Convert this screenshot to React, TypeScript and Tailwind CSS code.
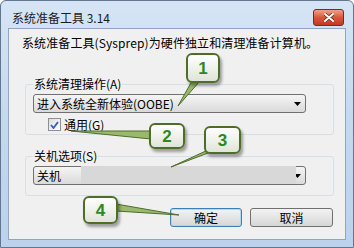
import React from "react";

const cjk = "font-['Noto_Sans_CJK_SC','Microsoft_YaHei',sans-serif]";

function Arrow() {
  return (
    <svg width="7" height="4" viewBox="0 0 7 4">
      <path d="M0 0h7L3.5 4z" fill="#000" />
    </svg>
  );
}

function Combo({ value }: { value: string }) {
  return (
    <div className="flex h-[19px] w-[273px] items-center justify-between rounded-[3px] border border-[#707070] bg-gradient-to-b from-[#f5f5f5] to-[#dadada] pl-[3px] pr-[4px] text-[12px] leading-[12px] text-black">
      <span>{value}</span>
      <Arrow />
    </div>
  );
}

function Callout({ n, className }: { n: string; className: string }) {
  return (
    <div
      className={`absolute flex items-center justify-center rounded-[6px] border-2 border-[#4e6e28] bg-gradient-to-b from-white to-[#e0e4d8] font-['Liberation_Sans',sans-serif] text-[17px] font-bold leading-none text-[#2b8a1c] shadow-[2px_3px_3px_rgba(0,0,0,0.35)] ${className}`}
    >
      {n}
    </div>
  );
}

export default function App() {
  return (
    <div
      className={`relative flex h-[248px] w-[354px] flex-col overflow-hidden rounded-t-[6px] border border-[#62768f] bg-gradient-to-b from-[#d6e5f5] via-[#c4d8ee] to-[#bcd2ec] ${cjk}`}
    >
      {/* title bar */}
      <div className="flex h-[27px] shrink-0 items-center justify-between pl-[11px] pr-[9px] pt-[6px]">
        <span className="text-[12px] leading-[12px] text-[#1b1b1b]">系统准备工具 3.14</span>
        <div className="flex h-[17px] w-[31px] items-center justify-center rounded-[3px] border border-[#7a2a1c] bg-gradient-to-b from-[#eea08c] via-[#d9553b] to-[#c13a22]">
          <svg width="10" height="9" viewBox="0 0 10 9">
            <path d="M1 1l8 7M9 1L1 8" stroke="#6a2a20" strokeWidth="3.4" strokeLinecap="round" />
            <path d="M1 1l8 7M9 1L1 8" stroke="#fff" strokeWidth="2" strokeLinecap="round" />
          </svg>
        </div>
      </div>

      {/* client area */}
      <div className="mx-[7px] flex h-[212px] shrink-0 flex-col border border-[#8fa5c2] bg-[#f0f0f0] text-black">
        <p className="ml-[13px] mt-[7px] text-[12px] leading-[14px] tracking-[0.1px]">
          系统准备工具(Sysprep)为硬件独立和清理准备计算机。
        </p>

        <fieldset className="ml-[16px] mr-[11px] mt-[28px] rounded-[3px] border border-[#d5dfe5] px-[7px] pb-[3px] pt-[4px]">
          <legend className="px-[1px] text-[12px] leading-[12px]">系统清理操作(A)</legend>
          <Combo value="进入系统全新体验(OOBE)" />
          <div className="ml-[15px] mt-[5px] flex items-center gap-[3px]">
            <div className="flex h-[13px] w-[13px] items-center justify-center border border-[#8e8f8f] bg-gradient-to-br from-[#dcdcdc] to-white">
              <svg width="9" height="8" viewBox="0 0 9 8">
                <path d="M1 4l2.5 3L8 1" fill="none" stroke="#2f5fc0" strokeWidth="1.8" />
              </svg>
            </div>
            <span className="text-[12px] leading-[13px]">通用(G)</span>
          </div>
        </fieldset>

        <fieldset className="ml-[16px] mr-[11px] mt-[15px] rounded-[3px] border border-[#d5dfe5] px-[7px] pb-[10px] pt-[4px]">
          <legend className="px-[1px] text-[12px] leading-[12px]">关机选项(S)</legend>
          <div className="relative">
            <Combo value="关机" />
            {/* redacted area */}
            <div className="absolute left-[48px] top-0 h-[18px] w-[215px] bg-[#d8d8d8]" />
          </div>
        </fieldset>

        <div className="mr-[12px] mt-[12px] flex justify-end gap-[8px] text-[12px] leading-[12px]">
          <button className="flex h-[19px] w-[72px] items-center justify-center rounded-[3px] border border-[#3c7fb1] bg-gradient-to-b from-[#f3f3f3] to-[#d6d6d6] shadow-[inset_0_0_0_1px_#a8dcf5]">
            确定
          </button>
          <button className="flex h-[19px] w-[83px] items-center justify-center rounded-[3px] border border-[#707070] bg-gradient-to-b from-[#f3f3f3] to-[#d6d6d6]">
            取消
          </button>
        </div>
      </div>

      {/* callout tails */}
      <svg className="pointer-events-none absolute left-0 top-0" width="354" height="248">
        <g fill="#9ab86e" stroke="#4e6e28" strokeWidth="1" strokeLinejoin="round">
          <polygon points="191,80 199,80 177,105" />
          <polygon points="150,130 150,138 70,130" />
          <polygon points="207,149 215,149 170,166" />
          <polygon points="115,203 115,210 178,214" />
        </g>
      </svg>

      <Callout n="1" className="left-[185px] top-[52px] h-[30px] w-[34px]" />
      <Callout n="2" className="left-[148px] top-[122px] h-[26px] w-[36px]" />
      <Callout n="3" className="left-[203px] top-[125px] h-[28px] w-[37px]" />
      <Callout n="4" className="left-[82px] top-[195px] h-[28px] w-[35px]" />
    </div>
  );
}
